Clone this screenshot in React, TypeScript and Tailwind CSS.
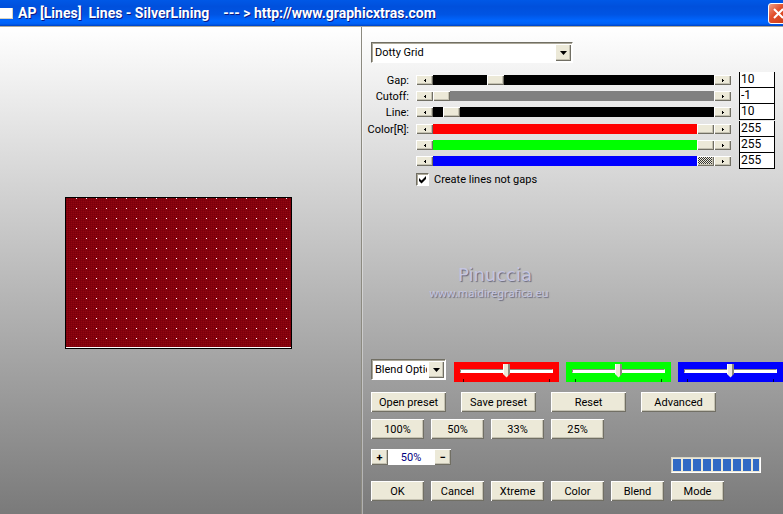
import { useState } from "react";
import type { ReactNode } from "react";

const raised =
  "bg-[#ece9d8] shadow-[inset_1px_1px_0_#ffffff,inset_-1px_-1px_0_#716f64,inset_-2px_-2px_0_#c5c2b2]";

const trackColors = {
  black: "bg-black",
  gray: "bg-[#808080]",
  red: "bg-[#ff0000]",
  green: "bg-[#00ff00]",
  blue: "bg-[#0000ff]",
};

type TrackColor = keyof typeof trackColors;

function Button({ wide = false, children }: { wide?: boolean; children: ReactNode }) {
  return (
    <button type="button" className={`${raised} h-5 shrink-0 text-center ${wide ? "w-[75px]" : "w-[53px]"}`}>
      {children}
    </button>
  );
}

function ArrowButton({ label, right = false }: { label: string; right?: boolean }) {
  return (
    <button
      type="button"
      aria-label={label}
      className={`${raised} flex h-[10px] w-[17px] shrink-0 items-center justify-center`}
    >
      <svg width="2" height="3" viewBox="0 0 2 3" aria-hidden="true" shapeRendering="crispEdges">
        <path d={right ? "M0 0H1V1H2V2H1V3H0Z" : "M2 0H1V1H0V2H1V3H2Z"} fill="#000" />
      </svg>
    </button>
  );
}

type ScrollProps = {
  label: string;
  caption?: string;
  min: number;
  max: number;
  initial: number;
  color: TrackColor;
  active?: boolean;
};

function ScrollRow({ label, caption, min, max, initial, color, active = false }: ScrollProps) {
  const [value, setValue] = useState(initial);
  const id = `scroll-${label}`;
  return (
    <div className="flex h-4 items-center">
      <label htmlFor={id} aria-label={label} className="mr-[7px] w-[46px] shrink-0 text-right whitespace-nowrap">
        {caption}
      </label>
      <div className="flex min-w-0 flex-1 items-center">
        <ArrowButton label={`Decrease ${label}`} />
        <input
          id={id}
          type="range"
          min={min}
          max={max}
          value={value}
          onChange={(e) => setValue(Number(e.target.value))}
          className={`h-[10px] min-w-0 flex-1 appearance-none ${trackColors[color]} [&::-webkit-slider-thumb]:h-[10px] [&::-webkit-slider-thumb]:w-[17px] [&::-webkit-slider-thumb]:appearance-none [&::-webkit-slider-thumb]:bg-[#ece9d8] [&::-webkit-slider-thumb]:shadow-[inset_1px_1px_0_#ffffff,inset_-1px_-1px_0_#716f64,inset_-2px_-2px_0_#c5c2b2] ${
            active
              ? "[&::-webkit-slider-thumb]:bg-[repeating-conic-gradient(#333_0_25%,#ece9d8_0_50%)] [&::-webkit-slider-thumb]:bg-[length:2px_2px]"
              : ""
          }`}
        />
        <ArrowButton label={`Increase ${label}`} right />
      </div>
      <input
        type="text"
        aria-label={`${label} value`}
        value={value}
        onChange={(e) => setValue(Number(e.target.value) || 0)}
        className="mr-2 ml-2 h-4 w-9 shrink-0 border-x border-b border-black bg-white pb-[2px] pl-px text-xs leading-3"
      />
    </div>
  );
}

function Dropdown({ label, options, className }: { label: string; options: string[]; className: string }) {
  return (
    <div className={`relative h-[21px] shrink-0 ${className}`}>
      <select
        aria-label={label}
        className="h-full w-full appearance-none border border-t-[#716f64] border-r-white border-b-white border-l-[#716f64] bg-white pr-[18px] pl-[3px] shadow-[inset_1px_1px_0_#aca899]"
      >
        {options.map((o) => (
          <option key={o}>{o}</option>
        ))}
      </select>
      <span
        className={`${raised} pointer-events-none absolute top-[2px] right-[2px] flex h-[17px] w-4 items-center justify-center`}
      >
        <svg width="7" height="4" viewBox="0 0 7 4" aria-hidden="true">
          <path d="M0 0H7L3.5 4Z" fill="#000" />
        </svg>
      </span>
    </div>
  );
}

function Trackbar({ label, color }: { label: string; color: TrackColor }) {
  return (
    <div className={`w-[105px] shrink-0 px-[6px] pt-[2px] ${trackColors[color]}`}>
      <input
        type="range"
        aria-label={label}
        defaultValue={50}
        className="block h-[13px] w-full appearance-none bg-transparent [&::-webkit-slider-runnable-track]:h-1 [&::-webkit-slider-runnable-track]:border [&::-webkit-slider-runnable-track]:border-t-[#8d8a7c] [&::-webkit-slider-runnable-track]:border-r-white [&::-webkit-slider-runnable-track]:border-b-white [&::-webkit-slider-runnable-track]:border-l-[#8d8a7c] [&::-webkit-slider-runnable-track]:bg-white [&::-webkit-slider-thumb]:-mt-[6px] [&::-webkit-slider-thumb]:h-[14px] [&::-webkit-slider-thumb]:w-[7px] [&::-webkit-slider-thumb]:appearance-none [&::-webkit-slider-thumb]:bg-[linear-gradient(90deg,#fff_1px,#ece9d8_1px_5px,#8d8a7c_5px)] [&::-webkit-slider-thumb]:[clip-path:polygon(0_0,100%_0,100%_75%,50%_100%,0_75%)]"
      />
      <div className="mt-[2px] flex justify-between px-[3px]">
        <span className="h-[3px] w-px bg-black/70" />
        <span className="h-[3px] w-px bg-black/70" />
      </div>
    </div>
  );
}

function Preview() {
  return (
    <svg width="227" height="152" viewBox="0 0 227 152" role="img" aria-label="Dotty grid preview" shapeRendering="crispEdges">
      <defs>
        <pattern id="weave" width="2" height="2" patternUnits="userSpaceOnUse">
          <rect width="2" height="2" fill="#84000c" />
          <rect width="1" height="1" fill="#8e0812" />
          <rect x="1" y="1" width="1" height="1" fill="#7c000a" />
        </pattern>
        <pattern id="dots" x="1" y="1" width="10" height="10" patternUnits="userSpaceOnUse">
          <rect x="0" y="0" width="1" height="1" fill="#fff" />
        </pattern>
      </defs>
      <rect width="227" height="152" fill="#000" />
      <rect x="1" y="1" width="225" height="150" fill="url(#weave)" />
      <rect x="2" y="1" width="224" height="149" fill="url(#dots)" />
      <rect x="1" y="150" width="225" height="1" fill="#fff" />
    </svg>
  );
}

export default function App() {
  return (
    <div className="flex min-h-screen flex-col overflow-hidden font-[Roboto,'Liberation_Sans',sans-serif] text-[11px] leading-[13px] text-black">
      <header className="flex h-[26px] shrink-0 items-center bg-[linear-gradient(#0058e6_0%,#0050dc_25%,#0054e3_55%,#0066ff_80%,#0060f4_92%,#0040c0_100%)]">
        <span className="h-[11px] w-[13px] shrink-0 border-r border-b border-[#d8d4c0] bg-white" />
        <h1 className="ml-[5px] flex-1 text-sm leading-5 font-bold whitespace-pre text-white [text-shadow:1px_1px_0_#0a1883]">
          {"AP [Lines]  Lines - SilverLining    --- > http://www.graphicxtras.com"}
        </h1>
        <button
          type="button"
          aria-label="Close"
          className="-mr-[6px] flex h-[21px] w-[21px] shrink-0 items-center justify-center rounded-[3px] border border-white bg-[linear-gradient(135deg,#f0a088,#e2502c_40%,#c83a14)]"
        >
          <svg width="11" height="11" viewBox="0 0 11 11" aria-hidden="true">
            <path d="M1 1L10 10M10 1L1 10" stroke="#fff" strokeWidth="2" />
          </svg>
        </button>
      </header>

      <div className="flex flex-1 border-t border-[#aca899] bg-[linear-gradient(#ffffff,#7a7a7a)]">
        <section className="flex w-[362px] shrink-0 items-center justify-center border-r border-[#8c8a80] pt-1 pr-1">
          <Preview />
        </section>

        <main className="flex min-w-0 flex-1 flex-col border-l border-white/40 pb-[13px]">
          <div className="pt-[15px] pl-2">
            <Dropdown label="Pattern" options={["Dotty Grid"]} className="w-[202px]" />
          </div>

          <div className="mt-[9px]">
            <ScrollRow label="Gap" caption="Gap:" min={0} max={49} initial={10} color="black" />
            <ScrollRow label="Cutoff" caption="Cutoff:" min={-1} max={255} initial={-1} color="gray" />
            <ScrollRow label="Line" caption="Line:" min={0} max={255} initial={10} color="black" />
            <div className="mt-px">
              <ScrollRow label="Red" caption="Color[R]:" min={0} max={255} initial={255} color="red" />
              <ScrollRow label="Green" min={0} max={255} initial={255} color="green" />
              <ScrollRow label="Blue" min={0} max={255} initial={255} color="blue" active />
            </div>
          </div>

          <label className="mt-1 flex items-center gap-[5px] pl-[53px]">
            <span className="relative flex h-[13px] w-[13px]">
              <input
                type="checkbox"
                defaultChecked
                className="peer h-[13px] w-[13px] appearance-none border border-t-[#716f64] border-r-white border-b-white border-l-[#716f64] bg-white shadow-[inset_1px_1px_0_#aca899]"
              />
              <svg
                className="pointer-events-none absolute inset-0 hidden peer-checked:block"
                width="13"
                height="13"
                viewBox="0 0 13 13"
                aria-hidden="true"
              >
                <path d="M3 5L5.5 7.5L10 3V6L5.5 10.5L3 8Z" fill="#000" />
              </svg>
            </span>
            Create lines not gaps
          </label>

          <div className="flex flex-1 flex-col items-center justify-center pt-5 pr-[168px] font-['Comic_Sans_MS','DejaVu_Sans',sans-serif] text-[#c6c6e0] [text-shadow:1px_1px_1px_#66667a]">
            <p className="pl-3 text-lg leading-5">Pinuccia</p>
            <p className="font-['Comic_Sans_MS','Noto_Sans',sans-serif] text-[11px] leading-4">www.maidiregrafica.eu</p>
          </div>

          <div className="flex items-start pl-2">
            <Dropdown label="Blend options" options={["Blend Options"]} className="w-[75px]" />
            <div className="mt-[3px] ml-2 flex gap-[7px]">
              <Trackbar label="Red blend" color="red" />
              <Trackbar label="Green blend" color="green" />
              <Trackbar label="Blue blend" color="blue" />
            </div>
          </div>

          <div className="mt-[10px] flex gap-[15px] pl-2">
            <Button wide>Open preset</Button>
            <Button wide>Save preset</Button>
            <Button wide>Reset</Button>
            <Button wide>Advanced</Button>
          </div>

          <div className="mt-[7px] flex gap-[7px] pl-2">
            <Button>100%</Button>
            <Button>50%</Button>
            <Button>33%</Button>
            <Button>25%</Button>
          </div>

          <div className="mt-[10px] flex items-start justify-between pr-[22px] pl-2">
            <div className="flex">
              <button type="button" aria-label="Zoom in" className={`${raised} h-4 w-[17px] font-bold`}>
                +
              </button>
              <input
                type="text"
                aria-label="Zoom"
                defaultValue="50%"
                className="h-4 w-[46px] bg-white text-center text-[#000080]"
              />
              <button type="button" aria-label="Zoom out" className={`${raised} h-4 w-[17px] font-bold`}>
                −
              </button>
            </div>
            <div
              role="progressbar"
              aria-label="Progress"
              aria-valuenow={100}
              className="mt-2 flex h-4 w-[90px] gap-[2px] border border-t-[#d8d4c4] border-r-white border-b-white border-l-[#d8d4c4] bg-[#ece9d8] p-px"
            >
              {Array.from({ length: 9 }, (_, i) => (
                <span key={i} className={`${i === 8 ? "w-[6px]" : "w-2"} shrink-0 bg-[#316ac5]`} />
              ))}
            </div>
          </div>

          <div className="mt-2 flex gap-[7px] pl-2">
            <Button>OK</Button>
            <Button>Cancel</Button>
            <Button>Xtreme</Button>
            <Button>Color</Button>
            <Button>Blend</Button>
            <Button>Mode</Button>
          </div>
        </main>
      </div>
    </div>
  );
}
